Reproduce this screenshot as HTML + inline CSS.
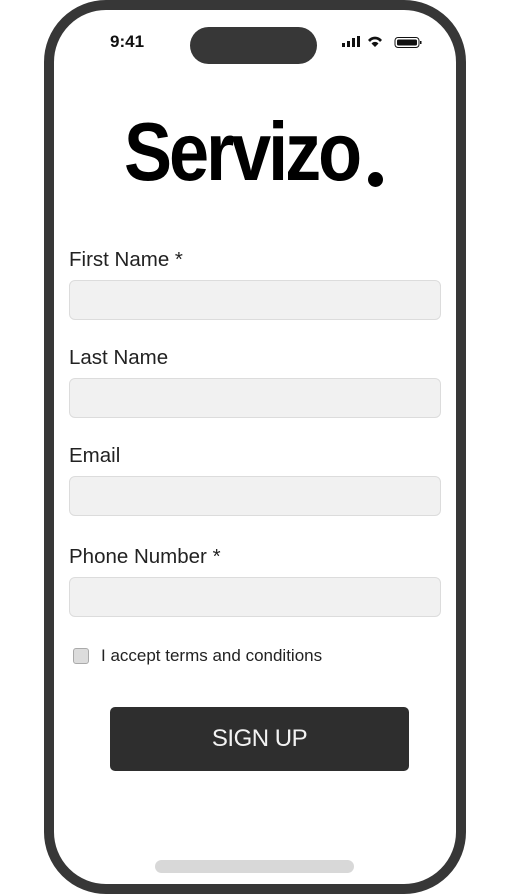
<!DOCTYPE html>
<html><head><meta charset="utf-8"><style>
*{margin:0;padding:0;box-sizing:border-box}
body{width:510px;height:894px;background:#fff;position:relative;overflow:hidden;font-family:"Liberation Sans",sans-serif}
.frame{position:absolute;left:44px;top:0;width:422px;height:894px;border:10px solid #373737;border-radius:62px;background:#fff}
.island{position:absolute;left:190px;top:27px;width:127px;height:37px;border-radius:19px;background:#373737}
.time{position:absolute;left:110px;top:32px;font-size:17px;font-weight:bold;color:#111}
.logo{position:absolute;left:124px;top:120px;font-size:72px;font-weight:bold;letter-spacing:-3px;color:#000;line-height:1;transform:scaleY(1.15);transform-origin:0 61px}
.dot{position:absolute;left:368px;top:172px;width:15px;height:15px;border-radius:50%;background:#000}
.lbl{position:absolute;left:69px;font-size:20.5px;color:#222}
.in{position:absolute;left:69px;width:372px;height:40px;background:#f1f1f1;border:1px solid #dcdcdc;border-radius:6px}
.cb{position:absolute;left:73px;top:648px;width:16px;height:16px;border:1px solid #aaa;background:#dcdcdc;border-radius:3px}
.ct{position:absolute;left:101px;top:646px;font-size:17px;color:#222}
.btn{position:absolute;left:110px;top:707px;width:299px;height:64px;background:#2e2e2e;border-radius:5px;color:#f2f2f2;font-size:24px;text-align:center;line-height:64px;letter-spacing:-0.5px}
.home{position:absolute;left:155px;top:860px;width:199px;height:13px;border-radius:7px;background:#d8d8d8}
</style></head><body>
<div class="frame"></div>
<div class="island"></div>
<div class="time">9:41</div>
<svg style="position:absolute;left:342px;top:35px" width="80" height="14" viewBox="0 0 80 14">
<rect x="0" y="8" width="3" height="4" fill="#111"/><rect x="5" y="6" width="3" height="6" fill="#111"/><rect x="10" y="3" width="3" height="9" fill="#111"/><rect x="15" y="1" width="3" height="11" fill="#111"/>
<path d="M26 5 A9 9 0 0 1 40 5 L38 7 A6 6 0 0 0 28 7Z M29.5 8.5 A4.5 4.5 0 0 1 36.5 8.5 L33 12Z" fill="#111"/>
<rect x="53" y="2.5" width="24" height="10" rx="3" fill="none" stroke="#111" stroke-width="1"/><rect x="55" y="4.5" width="20" height="6" rx="1.5" fill="#111"/><rect x="78" y="6" width="1.5" height="3" fill="#111"/>
</svg>
<div class="logo">Servizo</div>
<div class="dot"></div>
<div class="lbl" style="top:248px">First Name *</div><div class="in" style="top:280px"></div>
<div class="lbl" style="top:346px">Last Name</div><div class="in" style="top:378px"></div>
<div class="lbl" style="top:444px">Email</div><div class="in" style="top:476px"></div>
<div class="lbl" style="top:545px">Phone Number *</div><div class="in" style="top:577px"></div>
<div class="cb"></div><div class="ct">I accept terms and conditions</div>
<div class="btn">SIGN UP</div>
<div class="home"></div>
</body></html>
